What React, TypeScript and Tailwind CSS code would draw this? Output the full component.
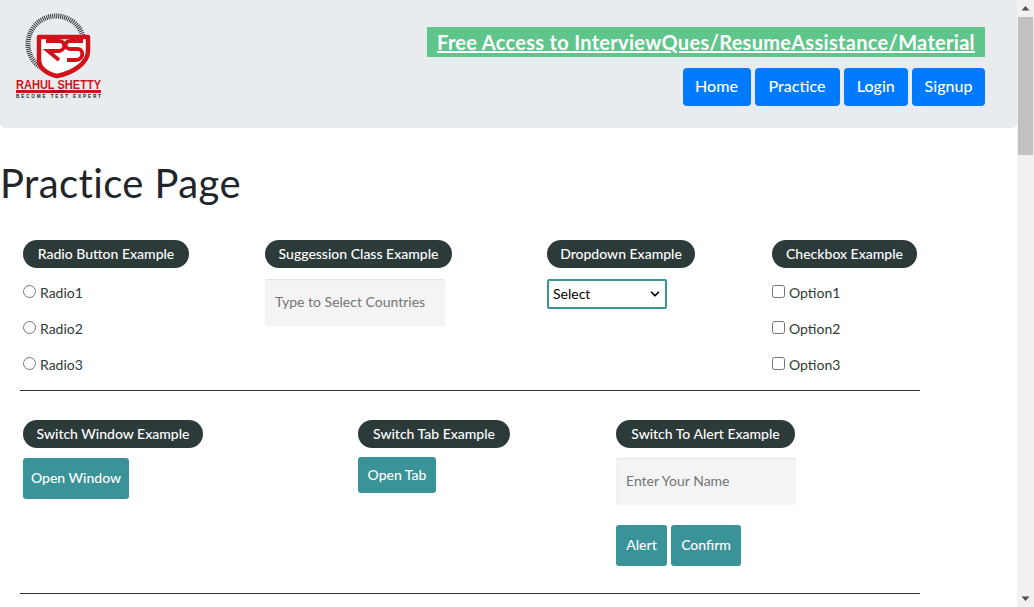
import React from 'react';
import { ChevronDown } from 'lucide-react';

const Logo: React.FC = () => (
  <svg width="92" height="90" viewBox="0 0 92 90" className="block">
    <circle cx="41" cy="31" r="28" fill="none" stroke="#333" strokeWidth="5" strokeDasharray="1 1" />
    <path d="M24 24H73V38C73 50 58 60 42 63C32 61 24 55 24 47Z" fill="#fff" stroke="#d0121b" strokeWidth="4.5" strokeLinejoin="round" />
    <path d="M31 28H44C51 28 51 37 44 38H33L44 47" fill="none" stroke="#d0121b" strokeWidth="3.8" />
    <path d="M68 28H55C49 28 49 36 55 36H63C69 36 69 47 61 47H52" fill="none" stroke="#d0121b" strokeWidth="3.8" />
    <text x="1" y="75.5" fontFamily="'Liberation Sans',sans-serif" fontSize="12" fontWeight="700" fill="#d0121b" textLength="85" lengthAdjust="spacingAndGlyphs">RAHUL SHETTY</text>
    <rect x="1" y="77" width="85" height="3" fill="#d0121b" />
    <text x="43.5" y="79.7" fontFamily="'Liberation Sans',sans-serif" fontSize="2.6" fill="#6b1015" textAnchor="middle">ACADEMY</text>
    <text x="1" y="84.7" fontFamily="'Liberation Sans',sans-serif" fontSize="4.7" fontWeight="700" fill="#222" textLength="85">BECOME TEST EXPERT</text>
  </svg>
);

const Legend: React.FC<{ children: React.ReactNode; width: string }> = ({ children, width }) => (
  <div className={`flex h-[28px] items-center justify-center rounded-[14px] bg-[#2c3a3a] pb-[2px] text-[14px] font-medium text-white ${width}`}>
    {children}
  </div>
);

const TealButton: React.FC<{ label: string; className: string }> = ({ label, className }) => (
  <button className={`rounded-[3px] bg-[#3a9399] pb-[2px] text-[14px] font-medium text-white ${className}`}>{label}</button>
);

const NavButton: React.FC<{ label: string; width: string }> = ({ label, width }) => (
  <button className={`h-[38px] rounded-[4px] bg-[#007bff] pb-[2px] text-[16px] font-medium text-white ${width}`}>{label}</button>
);

const CheckRow: React.FC<{ type: string; label: string }> = ({ type, label }) => (
  <label className="flex h-[36px] items-center pb-[2px] text-[14px] text-[#2c3a3a]">
    <input type={type} name={type} className="m-0 mr-[4px] -mt-[1px] h-[13px] w-[13px]" />
    {label}
  </label>
);

const App: React.FC = () => {
  return (
    <div className="flex h-[607px] overflow-hidden bg-white [font-family:'Lato',sans-serif]">
      <main className="w-[1017px] shrink-0">
        {/* Header */}
        <header className="flex h-[128px] justify-between rounded-b-[5px] bg-[#e9ecef] pr-[32px]">
          <div className="pl-[15px] pt-[13px]">
            <Logo />
          </div>
          <div className="flex flex-col items-end pt-[27px]">
            <a href="#" className="flex h-[30px] w-[558px] items-center justify-center bg-[#5fc68b] pb-[1px] text-[20px] font-bold tracking-[0.3px] text-white underline">
              Free Access to InterviewQues/ResumeAssistance/Material
            </a>
            <nav className="mt-[11px] flex gap-[4px]">
              <NavButton label="Home" width="w-[68px]" />
              <NavButton label="Practice" width="w-[85px]" />
              <NavButton label="Login" width="w-[64.5px]" />
              <NavButton label="Signup" width="w-[73px]" />
            </nav>
          </div>
        </header>

        <h1 className="mt-[31px] text-[40px] leading-[48px] tracking-[0.4px] text-[#212529]">Practice Page</h1>

        {/* First row */}
        <section className="mt-[33px] flex h-[150px] pl-[23px]">
          <div className="w-[242px]">
            <Legend width="w-[166px]">Radio Button Example</Legend>
            <div className="mt-[7px]">
              <CheckRow type="radio" label="Radio1" />
              <CheckRow type="radio" label="Radio2" />
              <CheckRow type="radio" label="Radio3" />
            </div>
          </div>
          <div className="w-[282px]">
            <Legend width="w-[187px]">Suggession Class Example</Legend>
            <input
              placeholder="Type to Select Countries"
              className="mt-[11px] block h-[47px] w-[180px] rounded-[2px] bg-[#f4f4f4] px-[10px] pb-[2px] text-[14px] shadow-[inset_0_1px_1px_rgba(0,0,0,0.08)] placeholder:text-[#757575]"
            />
          </div>
          <div className="w-[225px]">
            <Legend width="w-[148px]">Dropdown Example</Legend>
            <div className="relative mt-[11px] flex h-[30px] w-[120px] items-center rounded-[2px] border-2 border-[#3a9399] pb-[2px] pl-[4px] text-[14px] text-black">
              Select
              <ChevronDown size={14} strokeWidth={3} className="absolute right-[3px] top-[6px]" />
            </div>
          </div>
          <div>
            <Legend width="w-[145px]">Checkbox Example</Legend>
            <div className="mt-[7px]">
              <CheckRow type="checkbox" label="Option1" />
              <CheckRow type="checkbox" label="Option2" />
              <CheckRow type="checkbox" label="Option3" />
            </div>
          </div>
        </section>

        <hr className="ml-[20px] w-[900px] border-[#2c3a3a]" />

        {/* Second row */}
        <section className="mt-[29px] flex h-[173px] pl-[23px]">
          <div className="w-[335px]">
            <Legend width="w-[180px]">Switch Window Example</Legend>
            <TealButton label="Open Window" className="mt-[10px] block h-[41px] w-[106px]" />
          </div>
          <div className="w-[258px]">
            <Legend width="w-[152px]">Switch Tab Example</Legend>
            <TealButton label="Open Tab" className="mt-[9px] block h-[36px] w-[78px]" />
          </div>
          <div>
            <Legend width="w-[179px]">Switch To Alert Example</Legend>
            <input
              placeholder="Enter Your Name"
              className="mt-[10px] block h-[47px] w-[180px] rounded-[2px] bg-[#f4f4f4] px-[10px] pb-[2px] text-[14px] shadow-[inset_0_1px_1px_rgba(0,0,0,0.08)] placeholder:text-[#757575]"
            />
            <div className="mt-[20px] flex gap-[4px]">
              <TealButton label="Alert" className="h-[41px] w-[51px]" />
              <TealButton label="Confirm" className="h-[41px] w-[70px]" />
            </div>
          </div>
        </section>

        <hr className="ml-[20px] w-[900px] border-[#2c3a3a]" />
      </main>

      {/* Scrollbar */}
      <aside className="flex w-[17px] flex-col items-center bg-[#f1f1f1]">
        <svg width="17" height="17" viewBox="0 0 17 17" className="shrink-0">
          <path d="M8.5 6L12.5 10.5H4.5Z" fill="#505050" />
        </svg>
        <div className="h-[138px] w-[15px] bg-[#c1c1c1]" />
        <div className="flex-1" />
        <svg width="17" height="17" viewBox="0 0 17 17" className="shrink-0">
          <path d="M8.5 11L12.5 6.5H4.5Z" fill="#505050" />
        </svg>
      </aside>
    </div>
  );
};

export default App;
